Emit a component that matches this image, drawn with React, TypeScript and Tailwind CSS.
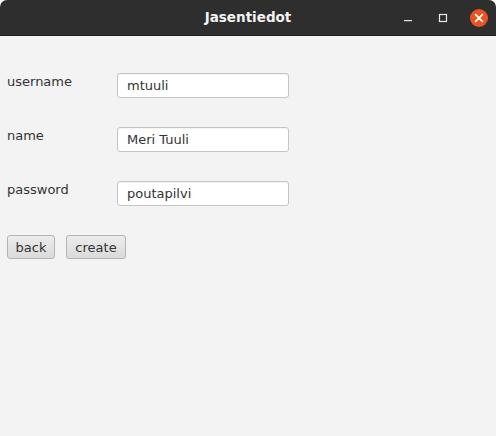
import React from "react";

const font = { fontFamily: '"DejaVu Sans", "Liberation Sans", sans-serif' };

function Field({ value }: { value: string }) {
  return (
    <div className="flex h-[25px] w-[172px] items-center rounded-[3px] border border-[#c5c5c5] bg-white pl-[9px] text-[13px] leading-[15px] text-[#333333] shadow-[inset_0_1px_1px_rgba(0,0,0,0.05)]">
      {value}
    </div>
  );
}

function Row({ label, value }: { label: string; value: string }) {
  return (
    <div className="flex items-start">
      <div className="mt-[1px] w-[110px] text-[13px] leading-[15px] text-[#333333]">{label}</div>
      <Field value={value} />
    </div>
  );
}

function Btn({ children, w }: { children: React.ReactNode; w: string }) {
  return (
    <div
      className={`flex h-[24px] ${w} items-center justify-center rounded-[3px] border border-[#b4b4b4] bg-gradient-to-b from-[#ececec] to-[#dadada] text-[13px] leading-[15px] text-[#333333]`}
    >
      {children}
    </div>
  );
}

export default function App() {
  return (
    <div className="h-[436px] w-[496px] overflow-hidden bg-white" style={font}>
      <div className="flex h-[436px] flex-col overflow-hidden rounded-t-[7px] bg-[#f3f3f3]">
        <div className="relative flex h-[36px] shrink-0 items-center justify-center bg-[#2f2e2e] border-b border-[#1e1e1e]">
          <span className="text-[13.5px] font-bold text-[#f2f2f2]">Jasentiedot</span>
          <div className="absolute right-[7px] top-0 flex h-[36px] items-center">
            <svg width="12" height="12" viewBox="0 0 12 12" className="mr-[23px]">
              <rect x="2" y="8" width="8" height="1.2" fill="#e8e8e8" />
            </svg>
            <svg width="12" height="12" viewBox="0 0 12 12" className="mr-[20px]">
              <rect x="2.5" y="2.5" width="7" height="7" fill="none" stroke="#e8e8e8" strokeWidth="1.2" />
            </svg>
            <svg width="20" height="20" viewBox="0 0 20 20">
              <circle cx="10" cy="10" r="9" fill="#e95420" />
              <path d="M6.6 6.6 L13.4 13.4 M13.4 6.6 L6.6 13.4" stroke="#ffffff" strokeWidth="1.6" strokeLinecap="round" />
            </svg>
          </div>
        </div>
        <div className="flex flex-col gap-[29px] pl-[7px] pt-[37px]">
          <Row label="username" value="mtuuli" />
          <Row label="name" value="Meri Tuuli" />
          <Row label="password" value="poutapilvi" />
          <div className="flex gap-[11px]">
            <Btn w="w-[48px]">back</Btn>
            <Btn w="w-[60px]">create</Btn>
          </div>
        </div>
      </div>
    </div>
  );
}
